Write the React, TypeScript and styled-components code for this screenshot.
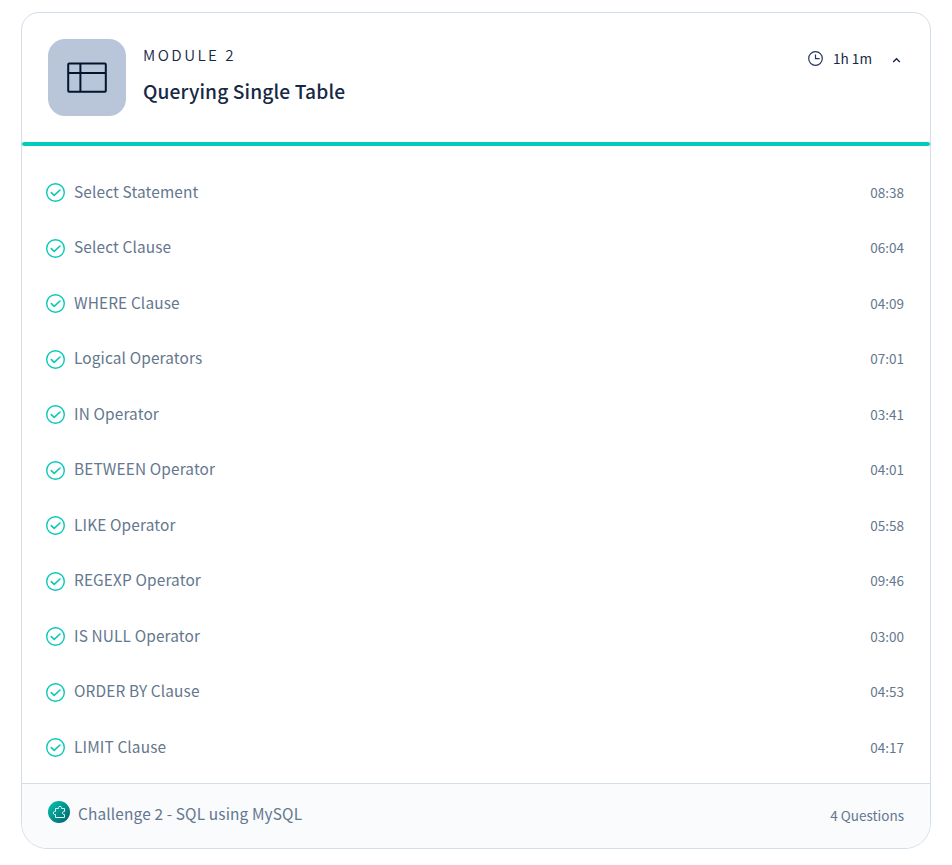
import React from "react";
import styled, { createGlobalStyle } from "styled-components";

const Global = createGlobalStyle`
  *, *::before, *::after { box-sizing: border-box; }
  body {
    margin: 0;
    background: #fff;
    font-family: "Noto Sans CJK SC", "Noto Sans", sans-serif;
    color: #172845;
  }
`;

const Card = styled.article`
  display: flex;
  flex-direction: column;
  width: 910px;
  height: 837px;
  margin: 12px 0 0 21px;
  border: 1px solid #d3dee8;
  border-radius: 18px 18px 26px 26px;
  overflow: hidden;
`;

const Header = styled.header`
  display: flex;
  align-items: flex-start;
  height: 129px;
  padding: 26px 26px 0;
`;

const IconTile = styled.div`
  display: flex;
  align-items: center;
  justify-content: center;
  width: 78px;
  height: 77px;
  border-radius: 17px;
  background: #b9c6da;
`;

const Heading = styled.div`
  flex: 1;
  padding: 3px 0 0 17px;
`;

const Eyebrow = styled.div`
  font-size: 15.2px;
  line-height: 24px;
  font-weight: 350;
  letter-spacing: 2.45px;
`;

const Title = styled.h2`
  margin: 11px 0 0;
  font-size: 19.2px;
  line-height: 28px;
  font-weight: 500;
  letter-spacing: 0.11px;
`;

const Duration = styled.div`
  display: flex;
  align-items: center;
  height: 20px;
  margin: 10px 3px 0 0;
  font-size: 13.6px;
  line-height: 20px;
`;

const DurationText = styled.span`
  margin: -2px 20px 0 10px;
`;

const Progress = styled.div`
  flex: none;
  height: 4px;
  border-radius: 2px;
  background: #00ccbb;
`;

const Lessons = styled.ul`
  flex: none;
  height: 637px;
  margin: 0;
  padding: 19px 26px 0 24px;
  list-style: none;
`;

const Lesson = styled.li`
  display: flex;
  align-items: center;
  height: 55.5px;
  color: #64778e;
`;

const LessonName = styled.span`
  flex: 1;
  padding: 0 0 4px 9px;
  font-size: 15.4px;
  line-height: 24px;
  letter-spacing: 0.14px;
`;

const Meta = styled.span`
  padding-bottom: 2px;
  font-size: 13.5px;
  line-height: 20px;
`;

const Footer = styled.footer`
  display: flex;
  flex: 1;
  padding: 17px 26px 0;
  border-top: 1px solid #d3dee8;
  background: #f9fbfd;
  color: #64778e;
`;

const ChallengeName = styled.span`
  flex: 1;
  padding: 0 0 0 8px;
  font-size: 15.4px;
  line-height: 24px;
  letter-spacing: 0.15px;
`;

const Questions = styled(Meta)`
  padding-top: 4px;
`;

const TableIcon = () => (
  <svg width="40" height="32" viewBox="0 0 40 32" fill="none" stroke="#04142e" strokeWidth="2">
    <rect x="1.2" y="1.4" width="37.6" height="28.4" rx="1" />
    <path d="M1 11H39M13.4 1.5V30" />
  </svg>
);

const ClockIcon = () => (
  <svg width="15" height="16" viewBox="0 0 15 16" fill="none" stroke="#22365a" strokeWidth="1.2">
    <circle cx="7.5" cy="7.5" r="6.8" />
    <path d="M7.5 3.5V7.7H11.6" />
  </svg>
);

const ChevronIcon = () => (
  <svg width="9" height="9" viewBox="0 0 9 9" fill="none" stroke="#15294b" strokeWidth="1.4">
    <path d="M1.2 6.9L4.5 3.7L7.8 6.9" />
  </svg>
);

const CheckIcon = () => (
  <svg width="19" height="19" viewBox="0 0 19 19" fill="none" stroke="#08c9b8">
    <circle cx="9.5" cy="9.5" r="8.8" strokeWidth="1.4" />
    <path d="M5.3 9.6L8.2 12.4L14 7" strokeWidth="1.6" strokeLinecap="round" strokeLinejoin="round" />
  </svg>
);

const PuzzleIcon = () => (
  <svg width="22" height="22" viewBox="0 0 22 22" fill="none">
    <defs>
      <linearGradient id="badge" x1="3" y1="3" x2="19" y2="19" gradientUnits="userSpaceOnUse">
        <stop stopColor="#03b9aa" />
        <stop offset="1" stopColor="#056c70" />
      </linearGradient>
    </defs>
    <circle cx="11" cy="11" r="11" fill="url(#badge)" />
    <path
      d="M7.5 16.5V13.5H6.4C5 13.5 5 10.5 6.4 10.5H7.5V7.5H10.5V6.4C10.5 5 13.5 5 13.5 6.4V7.5H16.5V10.5H15.6C14.2 10.5 14.2 13.5 15.6 13.5H16.5V16.5Z"
      stroke="#d6f7f3"
      strokeWidth="1"
      strokeLinejoin="round"
    />
  </svg>
);

const lessons = [
  { name: "Select Statement", time: "08:38" },
  { name: "Select Clause", time: "06:04" },
  { name: "WHERE Clause", time: "04:09" },
  { name: "Logical Operators", time: "07:01" },
  { name: "IN Operator", time: "03:41" },
  { name: "BETWEEN Operator", time: "04:01" },
  { name: "LIKE Operator", time: "05:58" },
  { name: "REGEXP Operator", time: "09:46" },
  { name: "IS NULL Operator", time: "03:00" },
  { name: "ORDER BY Clause", time: "04:53" },
  { name: "LIMIT Clause", time: "04:17" },
];

export default function App() {
  return (
    <>
      <Global />
      <Card>
        <Header>
          <IconTile>
            <TableIcon />
          </IconTile>
          <Heading>
            <Eyebrow>MODULE 2</Eyebrow>
            <Title>Querying Single Table</Title>
          </Heading>
          <Duration>
            <ClockIcon />
            <DurationText>1h 1m</DurationText>
            <ChevronIcon />
          </Duration>
        </Header>
        <Progress />
        <Lessons>
          {lessons.map(({ name, time }) => (
            <Lesson key={name}>
              <CheckIcon />
              <LessonName>{name}</LessonName>
              <Meta>{time}</Meta>
            </Lesson>
          ))}
        </Lessons>
        <Footer>
          <PuzzleIcon />
          <ChallengeName>Challenge 2 - SQL using MySQL</ChallengeName>
          <Questions>4 Questions</Questions>
        </Footer>
      </Card>
    </>
  );
}
